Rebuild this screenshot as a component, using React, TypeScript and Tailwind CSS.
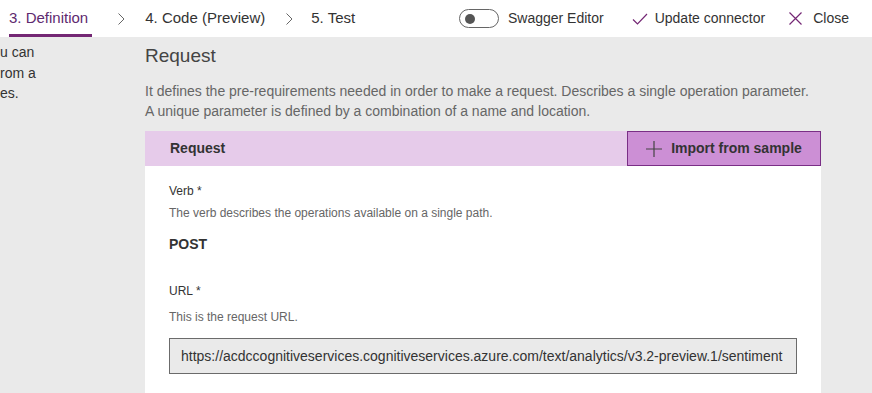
export default function App() {
  const font = { fontFamily: '"Segoe UI", "Liberation Sans", Arial, sans-serif' };
  return (
    <div className="w-[872px] h-[393px] overflow-hidden bg-[#eaeaea] flex flex-col text-[#333]" style={font}>
      {/* top bar */}
      <header className="h-[37px] bg-white flex items-stretch shrink-0">
        <nav className="flex items-center pl-[9px]">
          <div className="relative h-full flex items-center">
            <span className="text-[15px] text-[#5e2a6f]">3. Definition</span>
            <div className="absolute left-0 right-[-4px] bottom-0 h-[3px] bg-[#742774]" />
          </div>
          <Chevron className="ml-[30px] mr-[20px]" />
          <span className="text-[15px] text-[#333]">4. Code (Preview)</span>
          <Chevron className="ml-[21px] mr-[18px]" />
          <span className="text-[15px] text-[#333]">5. Test</span>
        </nav>
        <div className="ml-auto flex items-center pr-[23px]">
          <div className="w-[40px] h-[19px] rounded-full border border-[#666] flex items-center pl-[5px]">
            <div className="w-[10px] h-[10px] rounded-full bg-[#555]" />
          </div>
          <span className="ml-[9px] text-[14px]">Swagger Editor</span>
          <svg className="ml-[28px]" width="16" height="12" viewBox="0 0 16 12" fill="none">
            <path d="M1 6.5 L5.5 11 L15 1" stroke="#742774" strokeWidth="1.2" />
          </svg>
          <span className="ml-[7px] text-[14px]">Update connector</span>
          <svg className="ml-[24px]" width="13" height="13" viewBox="0 0 13 13" fill="none">
            <path d="M0.5 0.5 L12.5 12.5 M12.5 0.5 L0.5 12.5" stroke="#742774" strokeWidth="1.2" />
          </svg>
          <span className="ml-[11px] text-[14px]">Close</span>
        </div>
      </header>

      <div className="flex flex-1 min-h-0">
        {/* left, cut off panel */}
        <div className="w-[145px] shrink-0 pt-[5px] text-[14px] leading-[20.5px] text-[#333]">
          <div>u can</div>
          <div>rom a</div>
          <div>es.</div>
        </div>

        {/* main */}
        <main className="w-[676px] shrink-0 flex flex-col">
          <h2 className="mt-[7px] text-[19px] font-light text-[#444] leading-[24px]">Request</h2>
          <p className="mt-[13px] text-[14px] leading-[20px] text-[#666]">
            It defines the pre-requirements needed in order to make a request. Describes a single operation parameter.
            <br />
            A unique parameter is defined by a combination of a name and location.
          </p>
          <section className="mt-[10px] flex flex-col flex-1">
            <div className="h-[35px] bg-[#e6cbea] flex items-center justify-between">
              <span className="pl-[25px] text-[14px] font-semibold text-[#333]">Request</span>
              <button className="h-[35px] w-[194px] bg-[#cc8fd5] border border-[#7a2e86] flex items-center justify-center gap-[9px] text-[14px] font-semibold text-[#333]">
                <svg width="16" height="16" viewBox="0 0 16 16" fill="none">
                  <path d="M8 0 V16 M0 8 H16" stroke="#444" strokeWidth="1.2" />
                </svg>
                Import from sample
              </button>
            </div>
            <div className="bg-white flex-1 pl-[24px] pr-[24px] pt-[17px]">
              <div className="text-[12px] text-[#333] leading-[16px]">Verb *</div>
              <div className="mt-[7px] text-[12px] text-[#666] leading-[14px]">
                The verb describes the operations available on a single path.
              </div>
              <div className="mt-[15px] text-[14px] font-semibold text-[#333] leading-[18px]">POST</div>
              <div className="mt-[30px] text-[12px] text-[#333] leading-[16px]">URL *</div>
              <div className="mt-[11px] text-[12px] text-[#666] leading-[14px]">This is the request URL.</div>
              <div className="mt-[14px] h-[36px] w-[628px] bg-[#eaeaea] border border-[#6b6b6b] flex items-center pl-[11px] text-[14px] text-[#333]">
                https://acdccognitiveservices.cognitiveservices.azure.com/text/analytics/v3.2-preview.1/sentiment
              </div>
            </div>
          </section>
        </main>
      </div>
    </div>
  );
}

function Chevron({ className = "" }: { className?: string }) {
  return (
    <svg className={className} width="7" height="12" viewBox="0 0 7 12" fill="none">
      <path d="M0.5 0.5 L6 6 L0.5 11.5" stroke="#666" strokeWidth="1" />
    </svg>
  );
}
